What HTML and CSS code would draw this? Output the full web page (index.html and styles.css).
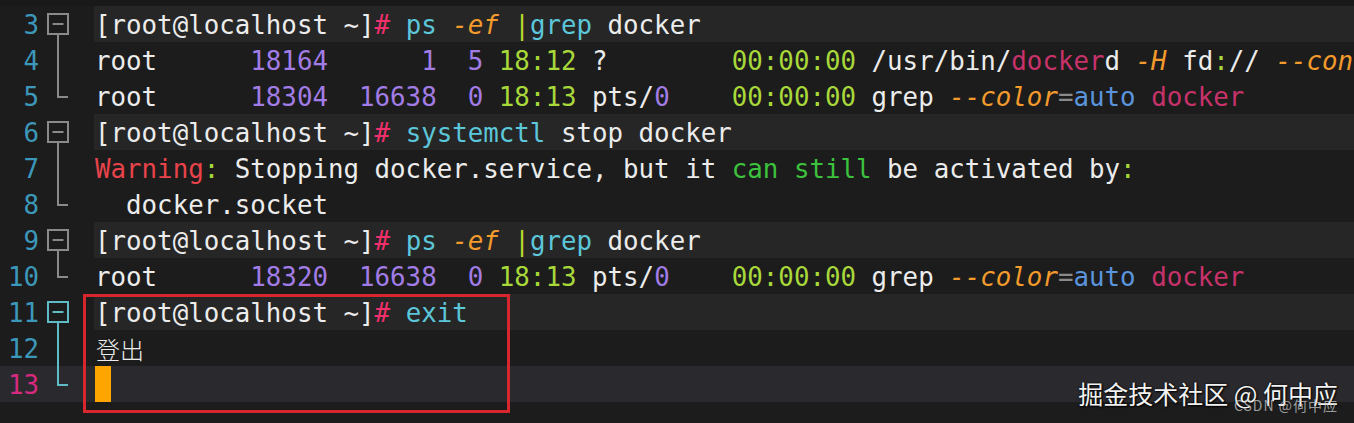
FILE: index.html
```html
<!DOCTYPE html>
<html lang="zh">
<head>
<meta charset="utf-8">
<title>terminal</title>
<link rel="stylesheet" href="styles.css">
</head>
<body>
<div class="screen">
  <div class="editor">
    <div class="row prompt">
      <span class="ln">3</span>
      <span class="fold"><svg width="54" height="36" viewBox="0 0 54 36"><rect x="8" y="8" width="20" height="20" class="s"/><path d="M12.5 18H23.5M18 28V36" class="s"/></svg></span>
      <span class="code">[root@localhost ~]<span class="hash">#</span> <span class="cmd">ps</span> <span class="opt">-ef</span> <span class="pipe">|</span><span class="cmd">grep</span> docker</span>
    </div>
    <div class="row">
      <span class="ln">4</span>
      <span class="fold"><svg width="54" height="36" viewBox="0 0 54 36"><path d="M18 0V36" class="s"/></svg></span>
      <span class="code">root      <span class="num">18164</span>      <span class="num">1</span>  <span class="num">5</span> <span class="time">18:12</span> ?        <span class="time">00:00:00</span> /usr/bin/<span class="kw">docker</span>d <span class="opt">-H</span> fd<span class="colon">:</span>// <span class="opt">--containerd</span>=/run/containerd/containerd.sock</span>
    </div>
    <div class="row">
      <span class="ln">5</span>
      <span class="fold"><svg width="54" height="36" viewBox="0 0 54 36"><path d="M18 0V19H28" class="s"/></svg></span>
      <span class="code">root      <span class="num">18304</span>  <span class="num">16638</span>  <span class="num">0</span> <span class="time">18:13</span> pts/<span class="num">0</span>    <span class="time">00:00:00</span> grep <span class="opt">--color</span><span class="eq">=</span><span class="auto">auto</span> <span class="kw">docker</span></span>
    </div>
    <div class="row prompt">
      <span class="ln">6</span>
      <span class="fold"><svg width="54" height="36" viewBox="0 0 54 36"><rect x="8" y="8" width="20" height="20" class="s"/><path d="M12.5 18H23.5M18 28V36" class="s"/></svg></span>
      <span class="code">[root@localhost ~]<span class="hash">#</span> <span class="cmd">systemctl</span> stop docker</span>
    </div>
    <div class="row">
      <span class="ln">7</span>
      <span class="fold"><svg width="54" height="36" viewBox="0 0 54 36"><path d="M18 0V36" class="s"/></svg></span>
      <span class="code"><span class="warn">Warning</span><span class="colon">:</span> Stopping docker.service, but it <span class="ok">can still</span> be activated by<span class="colon">:</span></span>
    </div>
    <div class="row">
      <span class="ln">8</span>
      <span class="fold"><svg width="54" height="36" viewBox="0 0 54 36"><path d="M18 0V19H28" class="s"/></svg></span>
      <span class="code">  docker.socket</span>
    </div>
    <div class="row prompt">
      <span class="ln">9</span>
      <span class="fold"><svg width="54" height="36" viewBox="0 0 54 36"><rect x="8" y="8" width="20" height="20" class="s"/><path d="M12.5 18H23.5M18 28V36" class="s"/></svg></span>
      <span class="code">[root@localhost ~]<span class="hash">#</span> <span class="cmd">ps</span> <span class="opt">-ef</span> <span class="pipe">|</span><span class="cmd">grep</span> docker</span>
    </div>
    <div class="row">
      <span class="ln">10</span>
      <span class="fold"><svg width="54" height="36" viewBox="0 0 54 36"><path d="M18 0V19H28" class="s"/></svg></span>
      <span class="code">root      <span class="num">18320</span>  <span class="num">16638</span>  <span class="num">0</span> <span class="time">18:13</span> pts/<span class="num">0</span>    <span class="time">00:00:00</span> grep <span class="opt">--color</span><span class="eq">=</span><span class="auto">auto</span> <span class="kw">docker</span></span>
    </div>
    <div class="row prompt">
      <span class="ln">11</span>
      <span class="fold"><svg width="54" height="36" viewBox="0 0 54 36"><rect x="8" y="8" width="20" height="20" class="s active"/><path d="M12.5 18H23.5M18 28V36" class="s active"/></svg></span>
      <span class="code">[root@localhost ~]<span class="hash">#</span> <span class="cmd">exit</span></span>
    </div>
    <div class="row">
      <span class="ln">12</span>
      <span class="fold"><svg width="54" height="36" viewBox="0 0 54 36"><path d="M18 0V36" class="s active"/></svg></span>
      <span class="code cjk">登出</span>
    </div>
    <div class="row current">
      <span class="ln">13</span>
      <span class="fold"><svg width="54" height="36" viewBox="0 0 54 36"><path d="M18 0V19H28" class="s active"/></svg></span>
      <span class="code caret-line"><span class="cursor"></span></span>
    </div>
  </div>
  <div class="mark-box"></div>
  <div class="watermark">掘金技术社区 @ 何中应</div>
  <div class="watermark-small">CSDN @何中应</div>
</div>
</body>
</html>
```

FILE: styles.css
```css
* { box-sizing: border-box; }
html, body {
  margin: 0;
  padding: 0;
  background: #1c1c1c;
}
.screen {
  position: relative;
  width: 1354px;
  height: 423px;
  overflow: hidden;
  background: #1c1c1c;
}
.editor {
  padding-top: 6px;
  background: linear-gradient(#191919 0 6px, #1c1c1c 6px);
  font-family: "DejaVu Sans Mono", "Liberation Mono", monospace;
  font-size: 25.8px;
  color: #ececec;
}
.row {
  display: grid;
  grid-template-columns: 40px 54px 1fr;
  height: 36px;
}
.ln, .code {
  padding-top: 2px;
  line-height: 34px;
}
.ln {
  text-align: right;
  color: #3c98ba;
  padding-right: 1px;
}
.fold {
  display: flex;
}
.fold svg { display: block; }
.s {
  fill: none;
  stroke: #8a8a8a;
  stroke-width: 2;
}
.s.active { stroke: #5fbcc6; }
.code {
  white-space: pre;
  overflow: hidden;
  padding-left: 1px;
}
.prompt .code { background: #262626; }
.current { background: #2a2a2e; }
.current .ln { color: #d62a80; }
.caret-line { padding-top: 0; }
.cjk {
  font-family: "Noto Sans CJK SC", sans-serif;
  font-weight: 300;
  font-size: 24px;
  padding-left: 2px;
}
.cursor {
  display: inline-block;
  width: 16px;
  height: 36px;
  background: #ffa500;
  vertical-align: top;
}
.hash { color: #f0306c; }
.cmd { color: #5cc6da; }
.opt { color: #f39a2c; font-style: italic; }
.pipe { color: #b8d82c; }
.num { color: #a27ce6; }
.time { color: #a8d83a; }
.kw { color: #c8326a; }
.colon { color: #a8d83a; }
.eq { color: #8a8a8a; }
.auto { color: #5a94dc; }
.warn { color: #e8434b; }
.ok { color: #3cc23c; }
.mark-box {
  position: absolute;
  left: 83px;
  top: 294px;
  width: 427px;
  height: 119px;
  border: 3px solid #d7262e;
}
.watermark {
  position: absolute;
  right: 16px;
  top: 376px;
  font-family: "Noto Sans CJK SC", sans-serif;
  font-size: 25px;
  line-height: 34px;
  color: #f2f2f2;
  text-shadow: 0 0 2px #000, 1px 1px 2px #000;
  white-space: nowrap;
}
.watermark-small {
  position: absolute;
  right: 16px;
  top: 396px;
  font-family: "Noto Sans CJK SC", sans-serif;
  font-size: 14px;
  letter-spacing: 1px;
  line-height: 18px;
  color: rgba(200, 200, 200, 0.75);
  white-space: nowrap;
}
```
